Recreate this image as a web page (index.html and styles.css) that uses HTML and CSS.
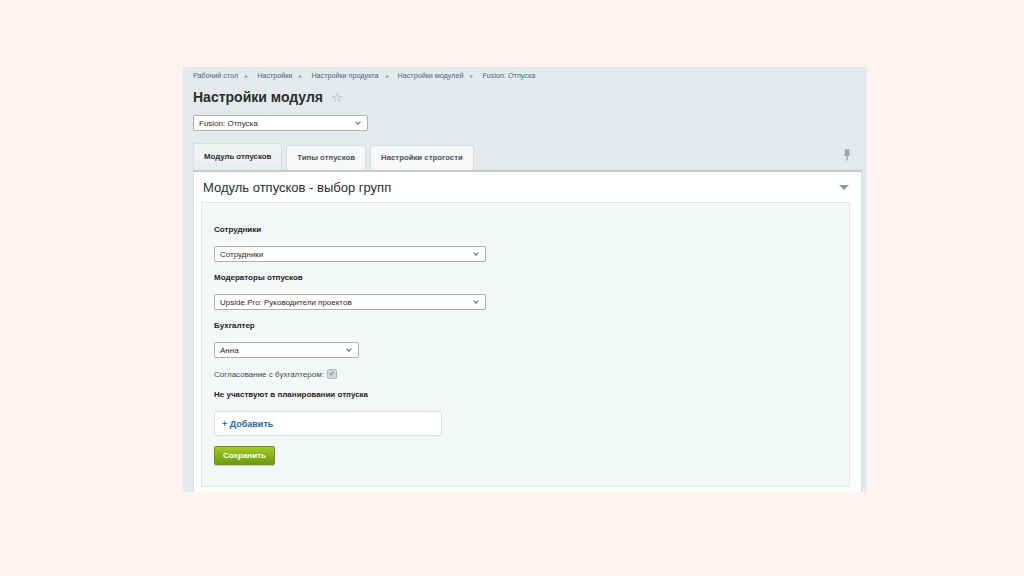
FILE: index.html
```html
<!DOCTYPE html>
<html lang="ru">
<head>
  <meta charset="UTF-8" />
  <title>Настройки модуля</title>
  <link rel="stylesheet" href="styles.css">
</head>
<body>
  <div class="screen">
    <div class="crumbs">
      <a>Рабочий стол</a><span class="sep">▸</span>
      <a>Настройки</a><span class="sep">▸</span>
      <a>Настройки продукта</a><span class="sep">▸</span>
      <a>Настройки модулей</a><span class="sep">▸</span>
      <a>Fusion: Отпуска</a>
    </div>

    <div class="title-row">
      <h1>Настройки модуля</h1>
      <span class="star">☆</span>
    </div>

    <div class="select module-select"><span>Fusion: Отпуска</span><i class="caret"></i></div>

    <div class="tabs">
      <div class="tab active">Модуль отпусков</div>
      <div class="tab">Типы отпусков</div>
      <div class="tab">Настройки строгости</div>
      <svg class="pin" width="8" height="12" viewBox="0 0 8 12">
        <path d="M1.5 1h5M2.5 1v4.5M5.5 1v4.5M1 6h6M4 6v5.5" stroke="#9aa5aa" stroke-width="1.3" fill="none"/>
        <rect x="2.5" y="1" width="3" height="5" fill="#9aa5aa"/>
      </svg>
    </div>

    <div class="panel">
      <div class="panel-head">
        <span>Модуль отпусков - выбор групп</span>
        <i class="collapse"></i>
      </div>
      <div class="inner">
        <div class="label">Сотрудники</div>
        <div class="select wide"><span>Сотрудники</span><i class="caret"></i></div>

        <div class="label">Модераторы отпусков</div>
        <div class="select wide"><span>Upside.Pro: Руководители проектов</span><i class="caret"></i></div>

        <div class="label">Бухгалтер</div>
        <div class="select narrow"><span>Анна</span><i class="caret"></i></div>

        <div class="check-row">
          Согласование с бухгалтером:
          <span class="checkbox">✓</span>
        </div>

        <div class="label">Не участвуют в планировании отпуска</div>
        <div class="add-box"><span class="add">+ Добавить</span></div>

        <button class="save">Сохранить</button>
      </div>
    </div>
  </div>
</body>
</html>
```

FILE: styles.css
```css
body {
  margin: 0;
  background: #fff3f2;
  font-family: "Liberation Sans", Arial, sans-serif;
}
.screen {
  margin: 67px 0 0 183px;
  width: 684px;
  height: 425px;
  box-sizing: border-box;
  padding: 3px 5px 0 10px;
  background: #e3eaec;
  overflow: hidden;
}
.crumbs {
  height: 12px;
  line-height: 12px;
  font-size: 7.2px;
  color: #4d6280;
}
.crumbs .sep {
  display: inline-block;
  margin: 0 7px;
  color: #8c989e;
  font-size: 6px;
}
.title-row {
  display: flex;
  align-items: center;
  height: 20px;
  margin-top: 5px;
}
h1 {
  margin: 0;
  font-size: 14px;
  color: #2a2d2f;
}
.star {
  margin-left: 8px;
  font-size: 13px;
  color: #9aa3a8;
}
.select {
  display: flex;
  align-items: center;
  justify-content: space-between;
  box-sizing: border-box;
  height: 16px;
  padding: 0 7px 0 5px;
  background: #fff;
  border: 1px solid #a8b1b5;
  border-radius: 2px;
  font-size: 8px;
  color: #2b2b2b;
}
.caret {
  width: 3px;
  height: 3px;
  border-right: 1px solid #666;
  border-bottom: 1px solid #666;
  transform: rotate(45deg);
  margin-top: -2px;
}
.module-select {
  width: 175px;
  margin-top: 8px;
}
.tabs {
  position: relative;
  display: flex;
  align-items: flex-end;
  gap: 4px;
  height: 27px;
  margin-top: 12px;
}
.tab {
  box-sizing: border-box;
  height: 25px;
  line-height: 24px;
  padding: 0 10px;
  background: #f6f8f9;
  border: 1px solid #d5dde0;
  border-bottom: none;
  border-radius: 3px 3px 0 0;
  font-size: 7.8px;
  font-weight: bold;
  color: #4a5357;
}
.tab.active {
  height: 27px;
  line-height: 26px;
  background: linear-gradient(#f2f5f6, #e6ecee);
  color: #2b2f31;
}
.pin {
  position: absolute;
  right: 11px;
  top: 6px;
}
.panel {
  height: 330px;
  box-sizing: border-box;
  background: #fff;
  border-top: 2px solid #c3cbcf;
  border-left: 1px solid #d6dee1;
  border-right: 1px solid #d6dee1;
  padding: 0 11px 0 7px;
}
.panel-head {
  display: flex;
  align-items: center;
  justify-content: space-between;
  height: 30px;
  padding: 0 1px 0 2px;
  font-size: 13px;
  color: #2a2d2f;
}
.collapse {
  width: 0;
  height: 0;
  border-left: 5px solid transparent;
  border-right: 5px solid transparent;
  border-top: 5px solid #8e989c;
}
.inner {
  height: 285px;
  box-sizing: border-box;
  background: #f4f7f8;
  border: 1px solid #dfe6e8;
  padding: 21px 12px 0;
}
.label {
  height: 12px;
  line-height: 12px;
  font-size: 8px;
  font-weight: bold;
  color: #1f2224;
  margin-bottom: 10px;
}
.wide {
  width: 272px;
  margin-bottom: 10px;
}
.narrow {
  width: 145px;
  margin-bottom: 10px;
}
.check-row {
  display: flex;
  align-items: center;
  height: 12px;
  font-size: 8px;
  color: #444a4d;
  margin-bottom: 9px;
}
.checkbox {
  display: inline-block;
  width: 8px;
  height: 8px;
  margin-left: 3px;
  background: #d2d7da;
  border: 1px solid #b3babd;
  border-radius: 2px;
  font-size: 7px;
  line-height: 8px;
  text-align: center;
  color: #5e6669;
}
.add-box {
  display: flex;
  align-items: center;
  box-sizing: border-box;
  width: 228px;
  height: 25px;
  padding: 0 7px;
  background: #fff;
  border: 1px solid #d7dee1;
  border-radius: 2px;
  margin-bottom: 10px;
}
.add {
  font-size: 9px;
  font-weight: bold;
  color: #2a66a8;
}
.save {
  display: block;
  width: 61px;
  height: 19px;
  padding: 0;
  background: linear-gradient(#a2cb24, #6c9a10);
  border: 1px solid #6a9411;
  border-radius: 2px;
  box-shadow: 0 1px 1px rgba(0, 0, 0, 0.2);
  font-family: "Liberation Sans", Arial, sans-serif;
  font-size: 8px;
  font-weight: bold;
  color: #fff;
}
```
